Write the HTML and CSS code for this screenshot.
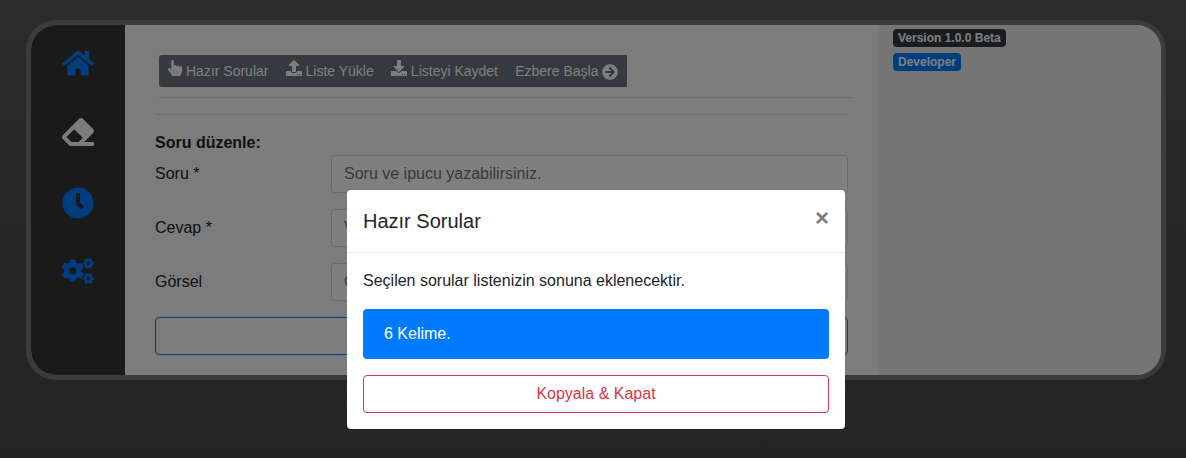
FILE: index.html
```html
<!DOCTYPE html>
<html lang="tr">
<head>
<meta charset="utf-8">
<title>Ezber</title>
<link rel="stylesheet" href="styles.css">
</head>
<body>
<div class="frame">
  <nav class="sidebar">
    <svg class="nav-icon nav-home" viewBox="0 0 576 512"><path d="M280.37 148.26L96 300.11V464a16 16 0 0 0 16 16l112.06-.29a16 16 0 0 0 15.92-16V368a16 16 0 0 1 16-16h64a16 16 0 0 1 16 16v95.64a16 16 0 0 0 16 16.05L464 480a16 16 0 0 0 16-16V300L295.67 148.26a12.19 12.19 0 0 0-15.3 0zM571.6 251.47L488 182.56V44.05a12 12 0 0 0-12-12h-56a12 12 0 0 0-12 12v72.61L318.47 43a48 48 0 0 0-61 0L4.34 251.47a12 12 0 0 0-1.6 16.9l25.5 31A12 12 0 0 0 45.15 301l235.22-193.74a12.19 12.19 0 0 1 15.3 0L530.9 301a12 12 0 0 0 16.9-1.6l25.5-31a12 12 0 0 0-1.7-16.93z"/></svg>
    <svg class="nav-icon nav-active" viewBox="0 0 512 512"><path d="M497.941 273.941c18.745-18.745 18.745-49.137 0-67.882l-160-160c-18.745-18.745-49.136-18.746-67.883 0l-256 256c-18.745 18.745-18.745 49.137 0 67.882l96 96A48.004 48.004 0 0 0 144 480h356c6.627 0 12-5.373 12-12v-40c0-6.627-5.373-12-12-12H355.883l142.058-142.059zm-302.627-62.627l137.373 137.373L265.373 416H150.628l-80-80 124.686-124.686z"/></svg>
    <svg class="nav-icon" viewBox="0 0 512 512"><path d="M256 8C119 8 8 119 8 256S119 504 256 504 504 393 504 256 393 8 256 8Zm92.49 313l-20 25a16 16 0 0 1-22.49 2.5l-67-49.72a40 40 0 0 1-15-31.23V112a16 16 0 0 1 16-16h32a16 16 0 0 1 16 16V256l58 42.5A16 16 0 0 1 348.49 321Z"/></svg>
    <svg class="nav-icon nav-cogs" viewBox="0 0 640 512">
      <defs><path id="small-cog" d="M512.1 191l-8.2 14.3c-3 5.3-9.4 7.5-15.1 5.4-11.8-4.4-22.6-10.7-32.1-18.6-4.6-3.8-5.8-10.5-2.8-15.7l8.2-14.3c-6.9-8-12.3-17.3-15.9-27.4h-16.5c-6 0-11.2-4.3-12.2-10.3-2-12-2.1-24.6 0-37.1 1-6 6.2-10.4 12.2-10.4h16.5c3.6-10.1 9-19.4 15.9-27.4l-8.2-14.3c-3-5.2-1.9-11.9 2.8-15.7 9.5-7.9 20.4-14.2 32.1-18.6 5.7-2.1 12.1.1 15.1 5.4l8.2 14.3c10.5-1.9 21.2-1.9 31.7 0L552 6.3c3-5.3 9.4-7.5 15.1-5.4 11.8 4.4 22.6 10.7 32.1 18.6 4.6 3.8 5.8 10.5 2.8 15.7l-8.2 14.3c6.9 8 12.3 17.3 15.9 27.4h16.5c6 0 11.2 4.3 12.2 10.3 2 12 2.1 24.6 0 37.1-1 6-6.2 10.4-12.2 10.4h-16.5c-3.6 10.1-9 19.4-15.9 27.4l8.2 14.3c3 5.2 1.9 11.9-2.8 15.7-9.5 7.9-20.4 14.2-32.1 18.6-5.7 2.1-12.1-.1-15.1-5.4l-8.2-14.3c-10.4 1.9-21.2 1.9-31.7 0zm-10.5-58.8c38.5 29.6 82.4-14.3 52.8-52.8-38.5-29.7-82.4 14.3-52.8 52.8z"/></defs>
      <use href="#small-cog"/>
      <use href="#small-cog" transform="translate(0 306)"/>
      <path d="M386.3 286.1l33.7 16.8c10.1 5.8 14.5 18.1 10.5 29.1-8.9 24.2-26.4 46.4-42.6 65.8-7.4 8.9-20.2 11.1-30.3 5.3l-29.1-16.8c-16 13.7-34.6 24.6-54.9 31.7v33.6c0 11.6-8.3 21.6-19.7 23.6-24.6 4.2-50.4 4.4-75.9 0-11.5-2-20-11.9-20-23.6V418c-20.3-7.2-38.9-18-54.9-31.7L74 403c-10 5.8-22.9 3.6-30.3-5.3-16.2-19.4-33.3-41.6-42.2-65.7-4-10.9.4-23.2 10.5-29.1l33.3-16.8c-3.9-20.9-3.9-42.4 0-63.4L12 205.8c-10.1-5.8-14.6-18.1-10.5-29 8.9-24.2 26-46.4 42.2-65.8 7.4-8.9 20.2-11.1 30.3-5.3l29.1 16.8c16-13.7 34.6-24.6 54.9-31.7V57.1c0-11.5 8.2-21.5 19.6-23.5 24.6-4.2 50.5-4.4 76-.1 11.5 2 20 11.9 20 23.6v33.6c20.3 7.2 38.9 18 54.9 31.7l29.1-16.8c10-5.8 22.9-3.6 30.3 5.3 16.2 19.4 33.2 41.6 42.1 65.8 4 10.9.1 23.2-10 29.1l-33.7 16.8c3.9 21 3.9 42.5 0 63.5zm-117.6 21.1c59.2-77-28.7-164.9-105.7-105.7-59.2 77 28.7 164.9 105.7 105.7z"/>
    </svg>
  </nav>
  <main class="content">
    <div class="toolbar">
      <div class="tool"><svg class="tool-icon hand" viewBox="0 0 448 512"><path d="M448 240v96c0 3.084-.356 6.159-1.063 9.162l-32 136C410.686 499.23 394.562 512 376 512H168a40.004 40.004 0 0 1-32.35-16.473l-127.997-176c-12.993-17.866-9.043-42.883 8.822-55.876 17.867-12.994 42.884-9.043 55.877 8.823L104 315.992V40c0-22.091 17.908-40 40-40s40 17.909 40 40v200h8v-40c0-22.091 17.908-40 40-40s40 17.909 40 40v40h8v-24c0-22.091 17.908-40 40-40s40 17.909 40 40v24h8c0-22.091 17.908-40 40-40s40 17.909 40 40zm-256 80h-8v96h8v-96zm88 0h-8v96h8v-96zm88 0h-8v96h8v-96z"/></svg> Hazır Sorular</div>
      <div class="tool"><svg class="tool-icon" viewBox="0 0 512 512"><path d="M296 384h-80c-13.3 0-24-10.7-24-24V192h-87.7c-17.8 0-26.7-21.5-14.1-34.1L242.3 5.7c7.5-7.5 19.8-7.5 27.3 0l152.2 152.2c12.6 12.6 3.7 34.1-14.1 34.1H320v168c0 13.3-10.7 24-24 24zm216-8v112c0 13.3-10.7 24-24 24H24c-13.3 0-24-10.7-24-24V376c0-13.3 10.7-24 24-24h136v8c0 30.9 25.1 56 56 56h80c30.9 0 56-25.1 56-56v-8h136c13.3 0 24 10.7 24 24zm-124 88c0-11-9-20-20-20s-20 9-20 20 9 20 20 20 20-9 20-20zm64 0c0-11-9-20-20-20s-20 9-20 20 9 20 20 20 20-9 20-20z"/></svg> Liste Yükle</div>
      <div class="tool"><svg class="tool-icon" viewBox="0 0 512 512"><path d="M216 0h80c13.3 0 24 10.7 24 24v168h87.7c17.8 0 26.7 21.5 14.1 34.1L269.7 378.3c-7.5 7.5-19.8 7.5-27.3 0L90.1 226.1c-12.6-12.6-3.7-34.1 14.1-34.1H192V24c0-13.3 10.7-24 24-24zm296 376v112c0 13.3-10.7 24-24 24H24c-13.3 0-24-10.7-24-24V376c0-13.3 10.7-24 24-24h146.7l49 49c20.1 20.1 52.5 20.1 72.6 0l49-49H488c13.3 0 24 10.7 24 24zm-124 88c0-11-9-20-20-20s-20 9-20 20 9 20 20 20 20-9 20-20zm64 0c0-11-9-20-20-20s-20 9-20 20 9 20 20 20 20-9 20-20z"/></svg> Listeyi Kaydet</div>
      <div class="tool tool-last">Ezbere Başla <svg class="tool-icon middle" viewBox="0 0 512 512"><path d="M256 8c137 0 248 111 248 248S393 504 256 504 8 393 8 256 119 8 256 8zm-28.9 143.6l75.5 72.4H120c-13.3 0-24 10.7-24 24v16c0 13.3 10.7 24 24 24h182.6l-75.5 72.4c-9.7 9.3-9.9 24.8-.4 34.3l11 10.9c9.4 9.4 24.6 9.4 33.9 0L404.3 273c9.4-9.4 9.4-24.6 0-33.9L271.6 106.3c-9.4-9.4-24.6-9.4-33.9 0l-11 10.9c-9.5 9.6-9.3 25.1.4 34.4z"/></svg></div>
    </div>
    <div class="rule rule-toolbar"></div>
    <div class="rule"></div>
    <div class="form-title">Soru düzenle:</div>
    <div class="row"><div class="label">Soru *</div><div class="input">Soru ve ipucu yazabilirsiniz.</div></div>
    <div class="row"><div class="label">Cevap *</div><div class="input">V</div></div>
    <div class="row"><div class="label">Görsel</div><div class="input">G</div></div>
    <div class="submit"></div>
  </main>
  <aside class="info">
    <span class="badge">Version 1.0.0 Beta</span>
    <span class="badge badge-blue">Developer</span>
  </aside>
</div>
<div class="backdrop">
  <div class="modal">
    <div class="modal-header"><div class="modal-title">Hazır Sorular</div><div class="close">×</div></div>
    <div class="modal-body">
      <div class="hint">Seçilen sorular listenizin sonuna eklenecektir.</div>
      <div class="list-item">6 Kelime.</div>
      <div class="confirm">Kopyala &amp; Kapat</div>
    </div>
  </div>
</div>
</body>
</html>
```
FILE: styles.css
```css
* { box-sizing: border-box; }

body {
  margin: 0;
  height: 458px;
  overflow: hidden;
  padding: 20px 20px 0 26px;
  font: 16px/24px "Liberation Sans", Arial, sans-serif;
  color: #212529;
  background: linear-gradient(#575757, #4a4a4a 85%, #494949);
}

.frame {
  display: flex;
  height: 360px;
  border: 5px solid #777;
  border-radius: 30px;
  overflow: hidden;
  background: #f8f8f8;
}

.sidebar {
  width: 94px;
  padding-top: 24px;
  background: #353535;
  display: flex;
  flex-direction: column;
  align-items: center;
  gap: 39px;
}

.nav-icon { width: 32px; height: 32px; flex: none; fill: #007bff; }
.nav-home { height: 28.4px; }
.nav-cogs { height: 25.6px; }
.nav-active { fill: #f8f9fa; }

.content { width: 753px; padding: 30px 30px 0; }

.toolbar {
  display: flex;
  width: 468px;
  height: 32px;
  margin-left: 4px;
  padding-left: 0.5px;
  background: #6c757d;
  border-radius: 3px 0 0 3px;
  color: #fff;
  font-size: 14px;
  line-height: 21px;
}

.tool { padding: 5px 8.6px; white-space: nowrap; }
.tool-last { padding-top: 6px; }
.tool-icon { width: 16px; height: 16px; fill: #fff; vertical-align: baseline; }
.hand { width: 14px; }
.middle { vertical-align: middle; }

.rule { height: 1px; margin-top: 16px; background: rgba(0, 0, 0, .1); }
.rule-toolbar { margin: 10px -5px 0 4px; }

.form-title { margin-top: 16px; font-weight: bold; }

.row { display: flex; margin-bottom: 16px; }
.label { width: 176px; padding-top: 7px; }

.input {
  flex: 1;
  height: 38px;
  padding: 6px 12px;
  border: 1px solid #ced4da;
  border-radius: 4px;
  background: #fff;
  color: #6c757d;
}

.submit { height: 38px; border: 1px solid #007bff; border-radius: 4px; }

.info {
  flex: 1;
  padding: 4px 15px;
  display: flex;
  flex-direction: column;
  align-items: flex-start;
  gap: 6px;
  background: #ebebeb;
}

.badge {
  height: 18px;
  padding: 3px 5px;
  border-radius: 4px;
  background: #343a40;
  color: #fff;
  font-size: 12px;
  font-weight: bold;
  line-height: 12px;
}
.badge-blue { background: #007bff; }

.backdrop {
  position: fixed;
  inset: 0;
  padding: 190px 0 0 347px;
  background: rgba(0, 0, 0, .5);
}

.modal { width: 498px; height: 239px; border-radius: 4px; background: #fff; }

.modal-header {
  display: flex;
  justify-content: space-between;
  height: 63px;
  padding: 16px;
  border-bottom: 1px solid #e9ecef;
}
.modal-title { font-size: 20px; line-height: 30px; }
.close { color: #7f7f7f; font-size: 24px; font-weight: bold; line-height: 24px; }

.modal-body { padding: 16px; }

.list-item {
  height: 50px;
  margin: 16px 0;
  padding: 13px 21px;
  border-radius: 4px;
  background: #007bff;
  color: #fff;
}

.confirm {
  height: 38px;
  padding-top: 6px;
  border: 1px solid #dc3545;
  border-radius: 4px;
  color: #dc3545;
  text-align: center;
}
```
